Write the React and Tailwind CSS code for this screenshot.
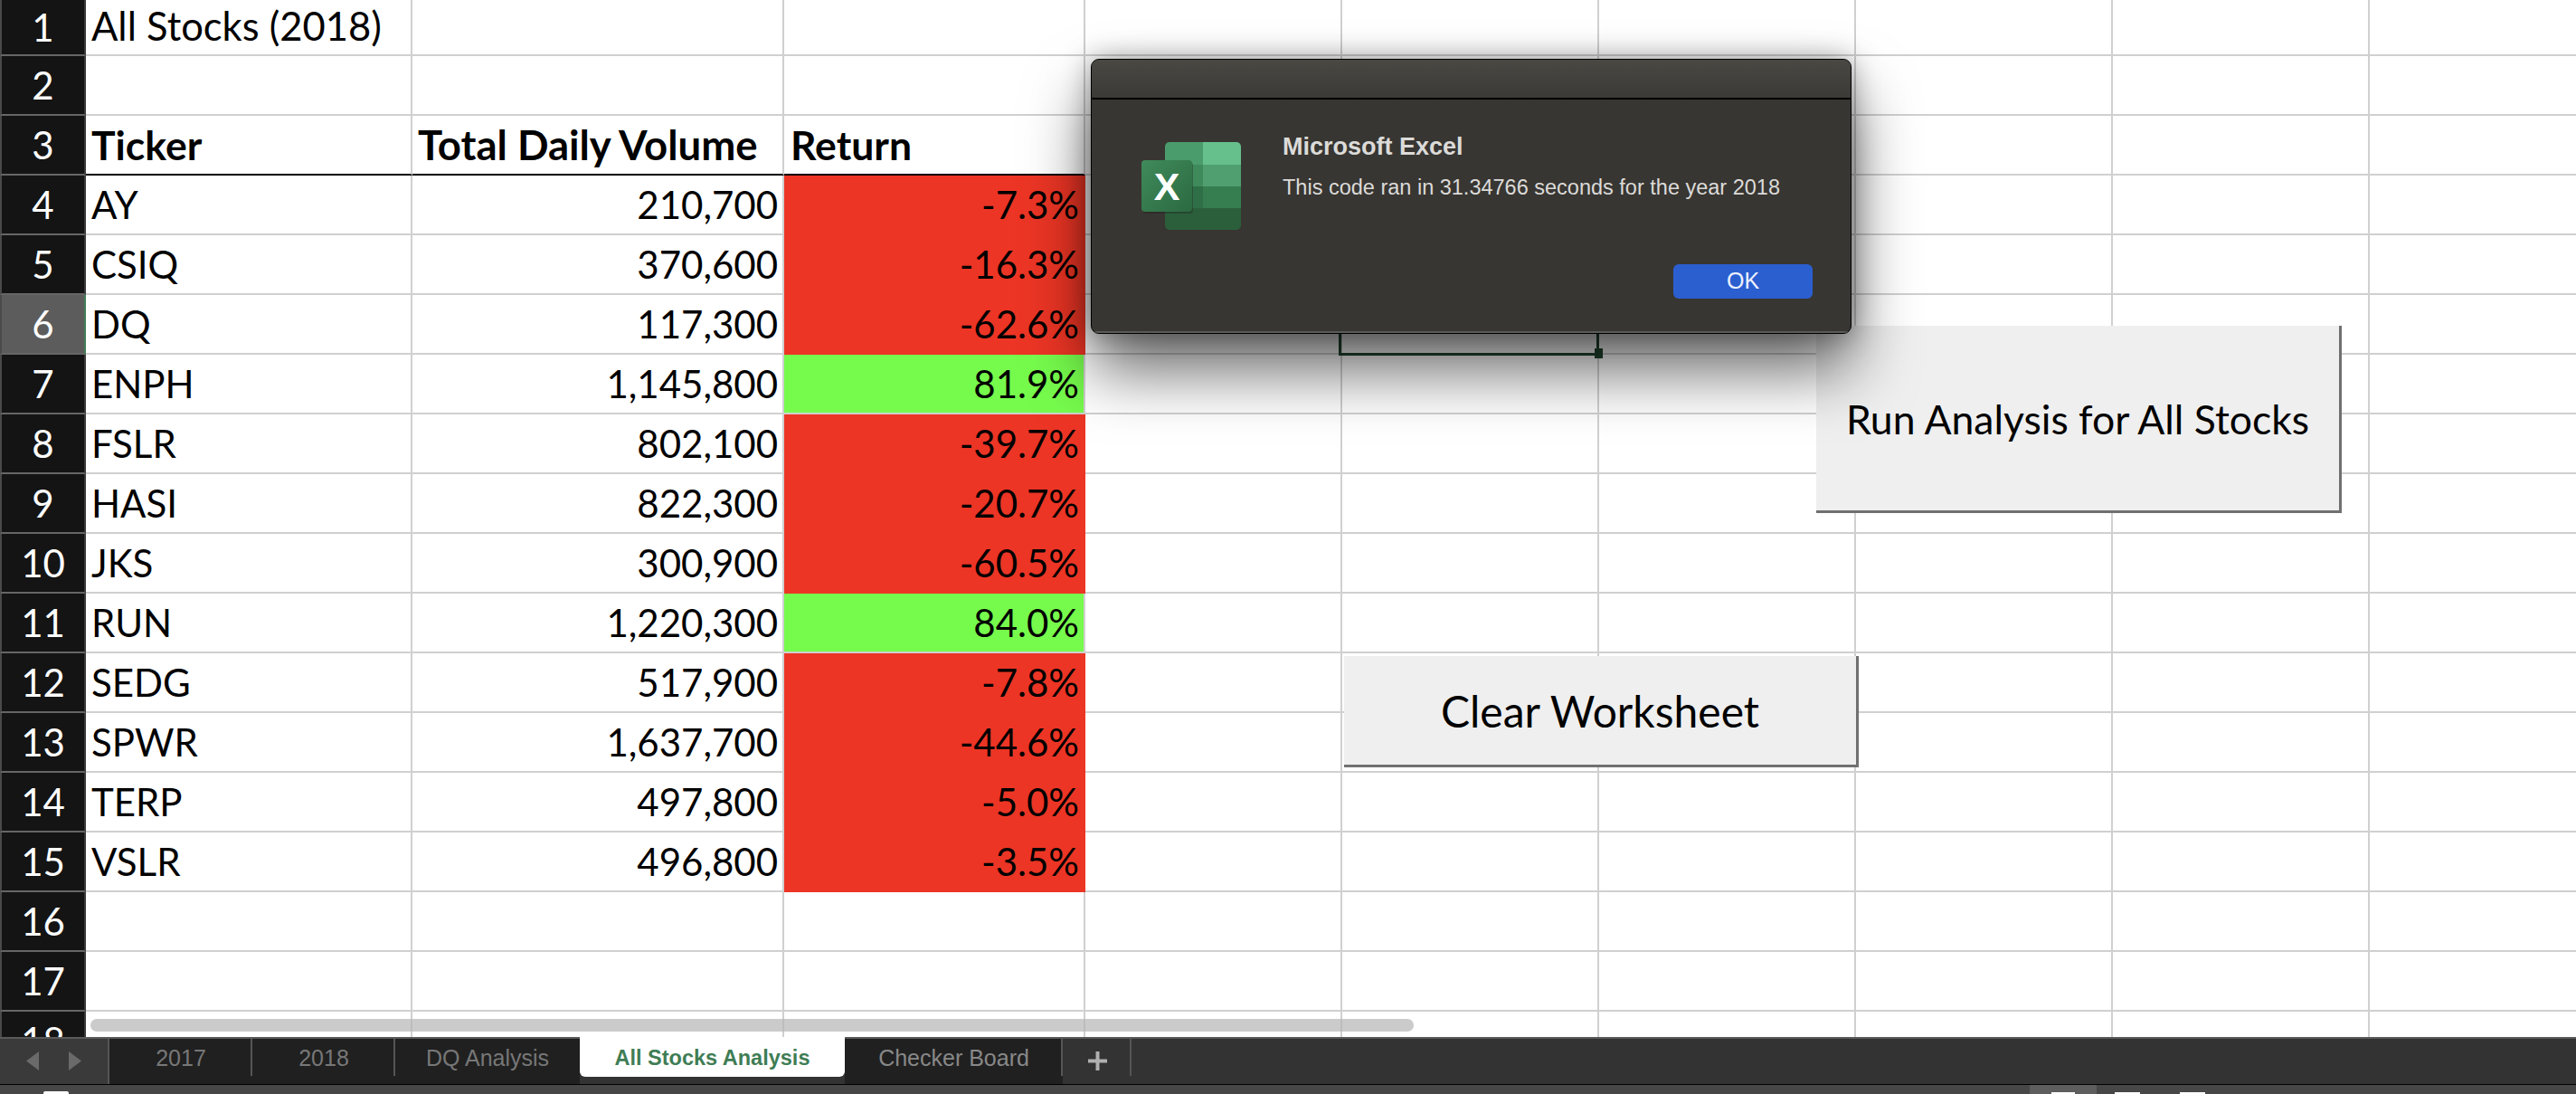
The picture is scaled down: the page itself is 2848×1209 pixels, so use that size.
import React from "react";

const rows = [
  ["AY", "210,700", "-7.3%", 0],
  ["CSIQ", "370,600", "-16.3%", 0],
  ["DQ", "117,300", "-62.6%", 0],
  ["ENPH", "1,145,800", "81.9%", 1],
  ["FSLR", "802,100", "-39.7%", 0],
  ["HASI", "822,300", "-20.7%", 0],
  ["JKS", "300,900", "-60.5%", 0],
  ["RUN", "1,220,300", "84.0%", 1],
  ["SEDG", "517,900", "-7.8%", 0],
  ["SPWR", "1,637,700", "-44.6%", 0],
  ["TERP", "497,800", "-5.0%", 0],
  ["VSLR", "496,800", "-3.5%", 0],
];

const cellBase = "border-b-2 border-r-2 border-[#d0d0d0] flex items-center shrink-0 h-full";
const A = "w-[361px] pl-[6px] " + cellBase;
const B = "w-[411px] " + cellBase;
const C = "w-[333px] " + cellBase;

function Rest() {
  return (
    <>
      <div className={"w-[284px] " + cellBase} />
      <div className={"w-[284px] " + cellBase} />
      <div className={"w-[284px] " + cellBase} />
      <div className={"w-[284px] " + cellBase} />
      <div className={"w-[284px] " + cellBase} />
      <div className={"w-[284px] " + cellBase} />
    </>
  );
}

function Row({ n, h = "h-[66px]", selected, children }) {
  return (
    <div className={"flex shrink-0 " + h}>
      <div
        className={
          "w-[95px] shrink-0 h-full flex items-center justify-center border-b-2 border-b-[#666] border-l-2 border-l-[#4a4a4a] text-white " +
          (selected ? "bg-[#5c5c5c] border-r-2 border-r-[#3f7f55]" : "bg-[#141414] border-r-2 border-r-[#3a3a3a]")
        }
      >
        {n}
      </div>
      {children}
      <Rest />
    </div>
  );
}

function Empty() {
  return (
    <>
      <div className={A} />
      <div className={B} />
      <div className={C} />
    </>
  );
}

function ExcelIcon() {
  return (
    <svg width="110" height="97" viewBox="0 0 110 97" className="shrink-0">
      <defs>
        <linearGradient id="tile" x1="0" y1="0" x2="1" y2="1">
          <stop offset="0" stopColor="#3f8a5a" />
          <stop offset="1" stopColor="#2c6a42" />
        </linearGradient>
        <clipPath id="sheet">
          <rect x="26" y="0" width="84" height="97" rx="5" />
        </clipPath>
      </defs>
      <g clipPath="url(#sheet)">
        <rect x="26" y="0" width="42" height="25" fill="#4b9c6c" />
        <rect x="68" y="0" width="42" height="25" fill="#66c08c" />
        <rect x="26" y="25" width="42" height="24" fill="#3f8a5b" />
        <rect x="68" y="25" width="42" height="24" fill="#4f9f70" />
        <rect x="26" y="49" width="42" height="24" fill="#2f6f47" />
        <rect x="68" y="49" width="42" height="24" fill="#367d50" />
        <rect x="26" y="73" width="84" height="24" fill="#2b5f3b" />
      </g>
      <rect x="0" y="20" width="56" height="57" rx="4" fill="#1d1d1b" opacity="0.35" transform="translate(1 2)" />
      <rect x="0" y="20" width="56" height="57" rx="4" fill="url(#tile)" />
      <text x="28" y="64" textAnchor="middle" fill="#ffffff" fontSize="43" fontWeight="700" fontFamily="'Liberation Sans', sans-serif">X</text>
    </svg>
  );
}

export default function App() {
  return (
    <div className="relative w-[2848px] h-[1209px] overflow-hidden flex flex-col bg-white text-black font-['Lato',sans-serif] text-[42px]">
      <div className="h-[1146px] shrink-0 flex flex-col overflow-hidden">
        <Row n="1" h="h-[62px]">
          <div className={A + " text-[43.5px] pb-[2px]"}>All Stocks (2018)</div>
          <div className={B} />
          <div className={C} />
        </Row>
        <Row n="2"><Empty /></Row>
        <Row n="3">
          <div className={A + " text-[44.5px] font-bold border-b-black"}>Ticker</div>
          <div className={B + " pl-[6px] text-[45.5px] font-bold border-b-black"}>Total Daily Volume</div>
          <div className={C + " pl-[7px] text-[44.5px] font-bold border-b-black"}>Return</div>
        </Row>
        {rows.map((r, i) => (
          <Row key={r[0]} n={String(i + 4)} selected={i === 2}>
            <div className={A}>{r[0]}</div>
            <div className={B + " justify-end pr-[5px]"}>{r[1]}</div>
            <div
              className={
                C + " justify-end pr-[5px] " + (r[3] ? "bg-[#76fb4c] border-[#76fb4c]" : "bg-[#ec3525] border-[#ec3525]")
              }
            >
              {r[2]}
            </div>
          </Row>
        ))}
        <Row n="16"><Empty /></Row>
        <Row n="17"><Empty /></Row>
        <Row n="18"><Empty /></Row>
      </div>

      {/* sheet tabs */}
      <div className="h-[53px] shrink-0 flex bg-[#333333] border-t-2 border-t-[#5a5a5a] border-b border-b-black font-['Liberation_Sans',sans-serif] text-[25px] leading-[30px]">
        <div className="w-[121px] shrink-0 bg-[#3a3a3a] flex items-center justify-center gap-[33px] pb-[2px] border-r-2 border-r-[#555]">
          <svg width="14" height="21" viewBox="0 0 14 21"><path d="M14 0V21L0 10.5Z" fill="#6a6a6a" /></svg>
          <svg width="14" height="21" viewBox="0 0 14 21"><path d="M0 0V21L14 10.5Z" fill="#6a6a6a" /></svg>
        </div>
        <div className="w-[158px] shrink-0 bg-[#202020] text-[#777] flex justify-center pt-[6px] relative">
          2017
          <span className="absolute right-0 top-0 h-[41px] w-[2px] bg-[#555]" />
        </div>
        <div className="w-[158px] shrink-0 bg-[#202020] text-[#777] flex justify-center pt-[6px] relative">
          2018
          <span className="absolute right-0 top-0 h-[41px] w-[2px] bg-[#555]" />
        </div>
        <div className="w-[204px] shrink-0 bg-[#202020] text-[#777] flex justify-center pt-[6px]">DQ Analysis</div>
        <div className="w-[293px] shrink-0 h-[44px] -mt-[2px] bg-white text-[#3f7d55] text-[23.5px] font-bold flex justify-center pt-[8px] rounded-b-[6px]">All Stocks Analysis</div>
        <div className="w-[241px] shrink-0 bg-[#202020] text-[#888] flex justify-center pt-[6px] relative">
          Checker Board
          <span className="absolute right-0 top-0 h-[41px] w-[2px] bg-[#555]" />
        </div>
        <div className="w-[76px] shrink-0 flex justify-center pt-[14px] relative">
          <svg width="21" height="21" viewBox="0 0 21 21"><path d="M8.5 0h4v8.5H21v4h-8.5V21h-4v-8.5H0v-4h8.5Z" fill="#b0b0b0" /></svg>
          <span className="absolute right-0 top-0 h-[41px] w-[2px] bg-[#555]" />
        </div>
      </div>

      {/* status bar */}
      <div className="h-[10px] shrink-0 bg-[#474747] flex overflow-hidden">
        <div className="ml-[48px] mt-[7px] w-[28px] h-[10px] bg-white rounded-[2px]" />
        <div className="ml-[2168px] w-[74px] h-full bg-[#5e5e5e] flex justify-center pt-[8px]">
          <div className="w-[26px] h-[10px] bg-white" />
        </div>
        <div className="ml-[20px] mt-[8px] w-[28px] h-[10px] bg-white" />
        <div className="ml-[44px] mt-[8px] w-[28px] h-[10px] bg-white" />
      </div>

      {/* scrollbar */}
      <div className="absolute left-[100px] top-[1126px] w-[1463px] h-[14px] rounded-full bg-[#b5b5b5]/70" />

      {/* selection */}
      <div className="absolute left-[1480px] top-[330px] w-[288px] h-[63px] border-[3px] border-[#21472f]" />
      <div className="absolute left-[1763px] top-[385px] w-[9px] h-[11px] bg-[#21472f]" />

      {/* macro buttons */}
      <div className="absolute left-[2008px] top-[360px] w-[581px] h-[207px] bg-[#efefef] border-r-[3px] border-b-[3px] border-[#707070] flex items-center justify-center text-[44.5px] pt-[2px]">
        Run Analysis for All Stocks
      </div>
      <div className="absolute left-[1486px] top-[725px] w-[569px] h-[123px] bg-[#efefef] border-r-[3px] border-b-[3px] border-[#707070] flex items-center justify-center text-[48px] pt-[2px]">
        Clear Worksheet
      </div>

      {/* dialog */}
      <div className="absolute left-[1206px] top-[65px] w-[841px] h-[304px] rounded-[9px] border border-black bg-[#383632] shadow-[0_40px_70px_rgba(0,0,0,0.6),0_0_30px_rgba(0,0,0,0.35)] font-['Liberation_Sans',sans-serif] flex flex-col overflow-hidden">
        <div className="h-[44px] shrink-0 bg-gradient-to-b from-[#4a4843] to-[#3c3a36] border-b-2 border-black" />
        <div className="flex-1 flex border-b-2 border-b-[#5a5a56]">
          <div className="pl-[55px] pt-[47px]"><ExcelIcon /></div>
          <div className="flex-1 pl-[46px] pt-[36px] flex flex-col">
            <div className="text-[27px] leading-[32px] font-bold text-[#dcdbd9]">Microsoft Excel</div>
            <div className="text-[23.5px] leading-[28px] mt-[15px] text-[#dcdbd9]">This code ran in 31.34766 seconds for the year 2018</div>
            <div className="flex justify-end mt-[71px] pr-[42px]">
              <div className="w-[154px] h-[38px] rounded-[6px] bg-[#2b5fd0] text-[#eef2ff] text-[25px] flex items-center justify-center">OK</div>
            </div>
          </div>
        </div>
      </div>
    </div>
  );
}
